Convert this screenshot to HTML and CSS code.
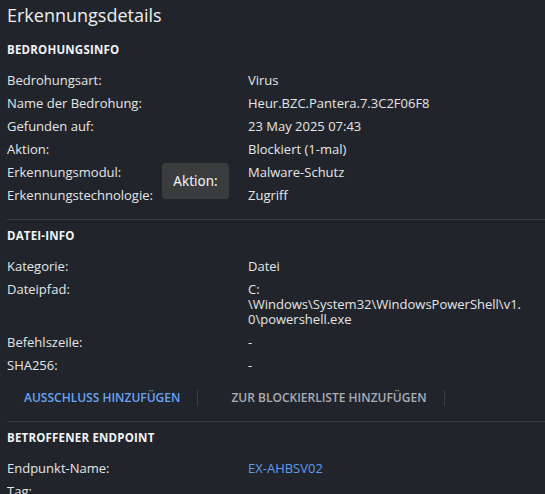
FILE: index.html
```html
<!DOCTYPE html>
<html lang="de">
<head>
<meta charset="utf-8">
<title>Erkennungsdetails</title>
<link rel="stylesheet" href="styles.css">
</head>
<body>
<div class="panel">
  <h1 class="title">Erkennungsdetails</h1>

  <section class="section">
    <h2 class="heading">BEDROHUNGSINFO</h2>
    <div class="grid">
      <div class="label">Bedrohungsart:</div><div class="value">Virus</div>
      <div class="label">Name der Bedrohung:</div><div class="value">Heur.BZC.Pantera.7.3C2F06F8</div>
      <div class="label">Gefunden auf:</div><div class="value">23 May 2025 07:43</div>
      <div class="label">Aktion:</div><div class="value">Blockiert (1-mal)</div>
      <div class="label">Erkennungsmodul:</div><div class="value">Malware-Schutz</div>
      <div class="label">Erkennungstechnologie:</div><div class="value">Zugriff</div>
    </div>
    <div class="tooltip">Aktion:</div>
  </section>

  <section class="section">
    <h2 class="heading">DATEI-INFO</h2>
    <div class="grid">
      <div class="label">Kategorie:</div><div class="value">Datei</div>
      <div class="label">Dateipfad:</div><div class="value">C:<br>\Windows\System32\WindowsPowerShell\v1.<br>0\powershell.exe</div>
      <div class="label">Befehlszeile:</div><div class="value">-</div>
      <div class="label">SHA256:</div><div class="value">-</div>
    </div>
    <div class="actions">
      <button class="action action-primary">AUSSCHLUSS HINZUFÜGEN</button>
      <span class="sep"></span>
      <button class="action action-secondary">ZUR BLOCKIERLISTE HINZUFÜGEN</button>
      <span class="sep"></span>
    </div>
  </section>

  <section class="section">
    <h2 class="heading">BETROFFENER ENDPOINT</h2>
    <div class="grid">
      <div class="label">Endpunkt-Name:</div><div class="value link">EX-AHBSV02</div>
      <div class="label">Tag:</div><div class="value"></div>
    </div>
  </section>
</div>
</body>
</html>
```

FILE: styles.css
```css
html, body {
  margin: 0;
  padding: 0;
  background: #21252b;
  height: 100%;
  overflow: hidden;
}

body {
  font-family: "Open Sans", "Noto Sans", sans-serif;
  color: #e4e5e7;
}

.panel {
  padding-left: 7px;
}

.title {
  margin: 0 0 8px 0;
  padding-top: 4px;
  font-size: 18px;
  line-height: 22px;
  font-weight: 400;
  color: #eceef0;
}

.section {
  position: relative;
  padding-top: 9px;
  padding-bottom: 16px;
  border-bottom: 1px solid #363a41;
}

.section:last-child {
  border-bottom: none;
}

.heading {
  margin: 0 0 16px 0;
  font-size: 11.5px;
  line-height: 14px;
  font-weight: 700;
  letter-spacing: 0.2px;
  color: #f2f3f5;
}

.grid {
  display: grid;
  grid-template-columns: 241px 280px;
  row-gap: 8px;
  font-size: 13px;
  line-height: 15px;
}

.value {
  overflow-wrap: anywhere;
}

.link {
  color: #5e9cf0;
}

.actions {
  display: flex;
  align-items: center;
  margin-top: 17px;
  margin-bottom: -1px;
  height: 16px;
}

.action {
  background: none;
  border: none;
  padding: 0 17px;
  font-family: "Open Sans", "Noto Sans", sans-serif;
  font-size: 12px;
  font-weight: 600;
  line-height: 16px;
  cursor: pointer;
}

.action-primary {
  color: #6aa2f4;
}

.action-secondary {
  color: #a9adb4;
  margin-left: 16px;
}

.sep {
  width: 1px;
  height: 16px;
  background: #3a3e45;
}

.tooltip {
  position: absolute;
  left: 155px;
  top: 129px;
  width: 67px;
  height: 36px;
  box-sizing: border-box;
  border-radius: 4px;
  background: #3b3c3e;
  color: #f4f4f4;
  font-family: "Noto Sans", "Open Sans", sans-serif;
  font-size: 13.5px;
  line-height: 36px;
  text-align: center;
}
```
